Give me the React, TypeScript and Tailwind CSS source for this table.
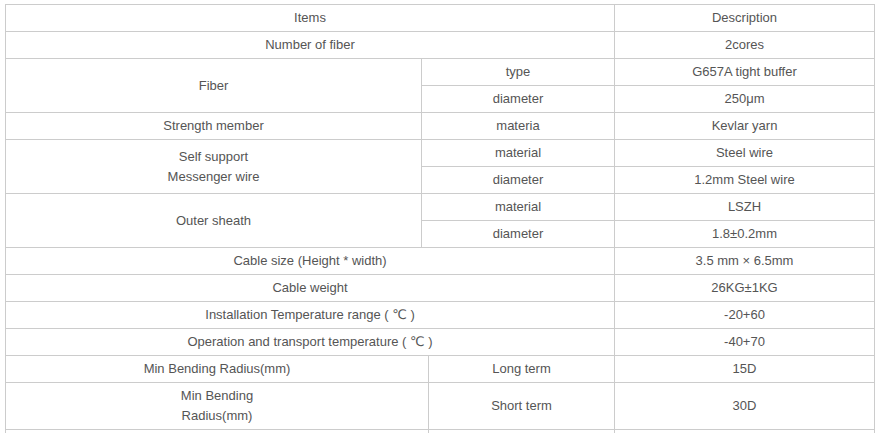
type Cell = {
  text: React.ReactNode;
  col: string;
  row?: string;
};

const rows: Cell[][] = [
  [
    { text: "Items", col: "col-span-3" },
    { text: "Description", col: "col-span-1" },
  ],
  [
    { text: "Number of fiber", col: "col-span-3" },
    { text: "2cores", col: "col-span-1" },
  ],
  [
    { text: "Fiber", col: "col-span-1", row: "row-span-2" },
    { text: "type", col: "col-span-2" },
    { text: "G657A tight buffer", col: "col-span-1" },
  ],
  [
    { text: "diameter", col: "col-span-2" },
    { text: "250μm", col: "col-span-1" },
  ],
  [
    { text: "Strength member", col: "col-span-1" },
    { text: "materia", col: "col-span-2" },
    { text: "Kevlar yarn", col: "col-span-1" },
  ],
  [
    {
      text: (
        <>
          Self support
          <br />
          Messenger wire
        </>
      ),
      col: "col-span-1",
      row: "row-span-2",
    },
    { text: "material", col: "col-span-2" },
    { text: "Steel wire", col: "col-span-1" },
  ],
  [
    { text: "diameter", col: "col-span-2" },
    { text: "1.2mm Steel wire", col: "col-span-1" },
  ],
  [
    { text: "Outer sheath", col: "col-span-1", row: "row-span-2" },
    { text: "material", col: "col-span-2" },
    { text: "LSZH", col: "col-span-1" },
  ],
  [
    { text: "diameter", col: "col-span-2" },
    { text: "1.8±0.2mm", col: "col-span-1" },
  ],
  [
    { text: "Cable size (Height * width)", col: "col-span-3" },
    { text: "3.5 mm × 6.5mm", col: "col-span-1" },
  ],
  [
    { text: "Cable weight", col: "col-span-3" },
    { text: "26KG±1KG", col: "col-span-1" },
  ],
  [
    { text: "Installation Temperature range ( ℃ )", col: "col-span-3" },
    { text: "-20+60", col: "col-span-1" },
  ],
  [
    { text: "Operation and transport temperature ( ℃ )", col: "col-span-3" },
    { text: "-40+70", col: "col-span-1" },
  ],
  [
    { text: "Min Bending Radius(mm)", col: "col-span-2" },
    { text: "Long term", col: "col-span-1" },
    { text: "15D", col: "col-span-1" },
  ],
  [
    {
      text: (
        <>
          Min Bending
          <br />
          Radius(mm)
        </>
      ),
      col: "col-span-2",
    },
    { text: "Short term", col: "col-span-1" },
    { text: "30D", col: "col-span-1" },
  ],
  // next row is cut off by the window, only its borders show
  [
    { text: "", col: "col-span-2" },
    { text: "", col: "col-span-1" },
    { text: "", col: "col-span-1" },
  ],
];

export default function App() {
  return (
    <div className="w-[878px] h-[433px] overflow-hidden bg-white pt-[4px] pl-[5px]">
      <div
        className="grid w-[870px] grid-cols-[416px_7px_186px_260px] border-l border-t border-[#cccccc] text-[13px] leading-5 text-[#555555]"
        style={{ fontFamily: '"Liberation Sans", Arial, "DejaVu Sans", "Noto Sans CJK SC", sans-serif' }}
      >
        {rows.map((row, i) =>
          row.map((cell, j) => (
            <div
              key={`${i}-${j}`}
              className={`${cell.col} ${cell.row ?? ""} flex min-h-[27px] items-center justify-center border-r border-b border-[#cccccc] py-[3px] text-center`}
            >
              <span>{cell.text}</span>
            </div>
          ))
        )}
      </div>
    </div>
  );
}
